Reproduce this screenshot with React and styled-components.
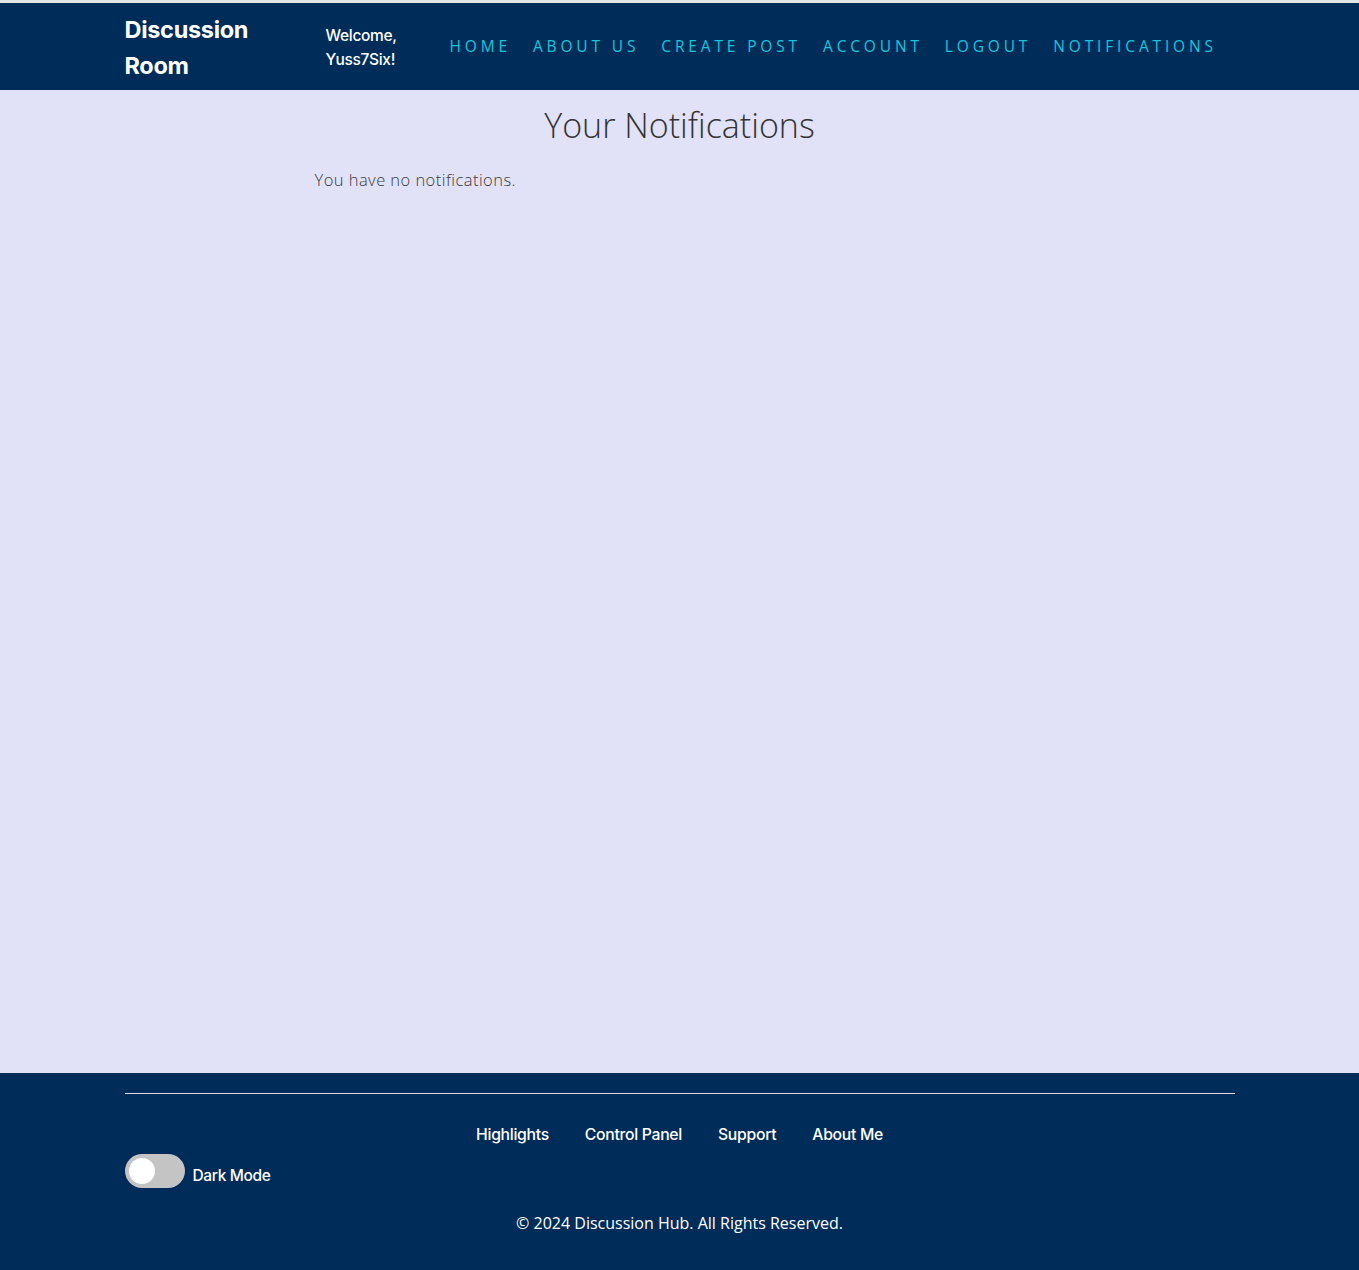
import React, { useState } from 'react';
import styled, { createGlobalStyle } from 'styled-components';

const GlobalStyle = createGlobalStyle`
  body {
    margin: 0;
    font-family: "Open Sans", "Liberation Sans", sans-serif;
    background: #e1e2f7;
  }
`;

const Page = styled.div`
  min-height: 100vh;
  display: flex;
  flex-direction: column;
  border-top: 3px solid #e6e6e6;
  box-sizing: border-box;
`;

const Header = styled.header`
  background: #002c5a;
  height: 87px;
  display: flex;
  justify-content: center;
`;

const Container = styled.div`
  width: 1110px;
  display: flex;
  align-items: center;
`;

const Brand = styled.a`
  font-family: Inter, "Liberation Sans", sans-serif;
  font-weight: 700;
  font-size: 23.5px;
  line-height: 36px;
  color: #fff;
  width: 140px;
  margin-right: 61px;
  margin-top: 2px;
  letter-spacing: -0.3px;
`;

const Welcome = styled.div`
  font-family: Inter, "Liberation Sans", sans-serif;
  font-weight: 500;
  font-size: 15.5px;
  line-height: 24px;
  color: #fff;
  width: 80px;
  margin-right: 44px;
  margin-top: 2px;
  letter-spacing: -0.3px;
`;

const NavList = styled.nav`
  display: flex;
  gap: 22px;
  margin-top: -2px;
`;

const NavLink = styled.a`
  font-family: "Open Sans", sans-serif;
  font-weight: 400;
  font-size: 15.5px;
  letter-spacing: 3.85px;
  text-transform: uppercase;
  color: #19c6db;
  cursor: pointer;
`;

const Main = styled.main`
  flex: 1;
  display: flex;
  justify-content: center;
`;

const Content = styled.div`
  width: 1110px;
  padding: 0 190px;
  box-sizing: border-box;
`;

const Title = styled.h1`
  font-family: "Open Sans", sans-serif;
  font-weight: 300;
  font-size: 34px;
  line-height: 40px;
  color: #333;
  text-align: center;
  margin: 15px 0 23px;
`;

const Empty = styled.p`
  font-family: "Open Sans", sans-serif;
  font-weight: 300;
  font-size: 16.5px;
  line-height: 24px;
  letter-spacing: 0.45px;
  color: #3a3a3a;
  margin: 0;
`;

const Footer = styled.footer`
  background: #002c5a;
  display: flex;
  justify-content: center;
  padding: 20px 0 35px;
`;

const FooterInner = styled.div`
  width: 1110px;
  display: flex;
  flex-direction: column;
`;

const Rule = styled.hr`
  border: none;
  border-top: 1px solid #d8dbe6;
  margin: 0;
`;

const FooterLinks = styled.div`
  display: flex;
  justify-content: center;
  gap: 36px;
  margin-top: 29px;
`;

const FooterLink = styled.a`
  font-family: Inter, "Liberation Sans", sans-serif;
  font-weight: 500;
  font-size: 15.75px;
  line-height: 24px;
  color: #fff;
  letter-spacing: -0.3px;
`;

const ToggleRow = styled.label`
  display: flex;
  align-items: center;
  gap: 8px;
  margin-top: 7px;
  cursor: pointer;
`;

const Switch = styled.span`
  position: relative;
  width: 60px;
  height: 34px;
  border-radius: 34px;
  background: ${({ on }) => (on ? '#2196f3' : '#c4c4c4')};
  flex-shrink: 0;

  &::before {
    content: '';
    position: absolute;
    width: 26px;
    height: 26px;
    left: ${({ on }) => (on ? '30px' : '4px')};
    top: 4px;
    border-radius: 50%;
    background: #fff;
  }
`;

const ToggleText = styled.span`
  font-family: Inter, "Liberation Sans", sans-serif;
  font-weight: 500;
  font-size: 15.5px;
  color: #fff;
  margin-top: 8px;
  letter-spacing: -0.35px;
`;

const Copyright = styled.p`
  font-family: "Open Sans", sans-serif;
  font-weight: 400;
  font-size: 16px;
  line-height: 24px;
  color: #fff;
  text-align: center;
  margin: 23px 0 0;
`;

const navItems = ['Home', 'About Us', 'Create Post', 'Account', 'Logout', 'Notifications'];
const footerItems = ['Highlights', 'Control Panel', 'Support', 'About Me'];

export default function App() {
  const [dark, setDark] = useState(false);

  return (
    <>
      <GlobalStyle />
      <Page>
        <Header>
          <Container>
            <Brand>Discussion Room</Brand>
            <Welcome>Welcome, Yuss7Six!</Welcome>
            <NavList>
              {navItems.map((item) => (
                <NavLink key={item}>{item}</NavLink>
              ))}
            </NavList>
          </Container>
        </Header>
        <Main>
          <Content>
            <Title>Your Notifications</Title>
            <Empty>You have no notifications.</Empty>
          </Content>
        </Main>
        <Footer>
          <FooterInner>
            <Rule />
            <FooterLinks>
              {footerItems.map((item) => (
                <FooterLink key={item}>{item}</FooterLink>
              ))}
            </FooterLinks>
            <ToggleRow onClick={() => setDark(!dark)}>
              <Switch on={dark ? 1 : 0} />
              <ToggleText>Dark Mode</ToggleText>
            </ToggleRow>
            <Copyright>© 2024 Discussion Hub. All Rights Reserved.</Copyright>
          </FooterInner>
        </Footer>
      </Page>
    </>
  );
}
